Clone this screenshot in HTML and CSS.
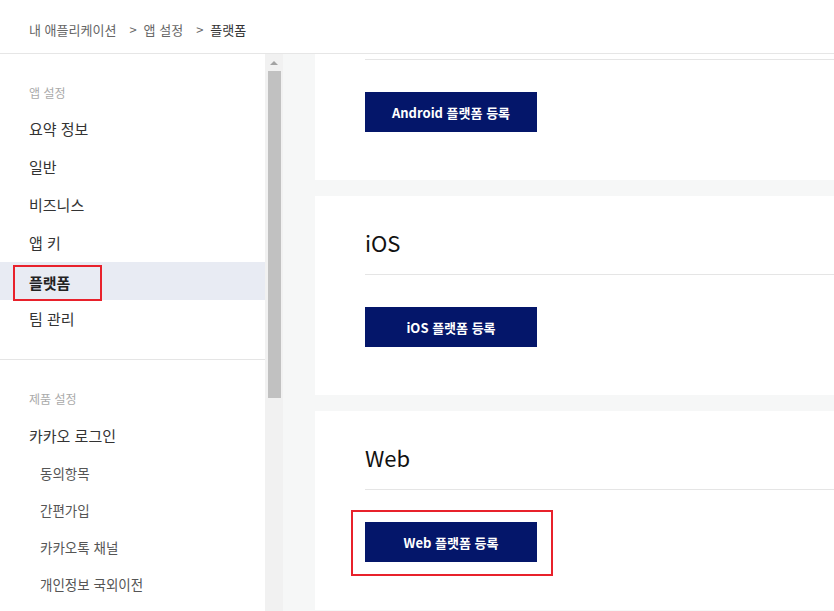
FILE: index.html
```html
<!DOCTYPE html>
<html lang="ko">
<head>
  <meta charset="UTF-8">
  <title>플랫폼 - 앱 설정</title>
  <link rel="stylesheet" href="styles.css">
</head>
<body>
  <header class="topbar">
    <nav class="breadcrumb">
      <a href="#">내 애플리케이션</a><span class="sep">&gt;</span><a href="#">앱 설정</a><span class="sep">&gt;</span><span class="current">플랫폼</span>
    </nav>
  </header>

  <div class="layout">
    <aside class="sidebar">
      <div class="menu-group">
        <p class="menu-label">앱 설정</p>
        <ul class="menu">
          <li><a href="#">요약 정보</a></li>
          <li><a href="#">일반</a></li>
          <li><a href="#">비즈니스</a></li>
          <li><a href="#">앱 키</a></li>
          <li class="active"><a href="#"><span class="marked">플랫폼</span></a></li>
          <li><a href="#">팀 관리</a></li>
        </ul>
      </div>
      <div class="menu-group">
        <p class="menu-label">제품 설정</p>
        <ul class="menu">
          <li><a href="#">카카오 로그인</a></li>
          <li class="sub"><a href="#">동의항목</a></li>
          <li class="sub"><a href="#">간편가입</a></li>
          <li class="sub"><a href="#">카카오톡 채널</a></li>
          <li class="sub"><a href="#">개인정보 국외이전</a></li>
        </ul>
      </div>
    </aside>

    <!-- sidebar scrollbar -->
    <div class="scrollbar">
      <span class="scroll-arrow"></span>
      <span class="scroll-thumb"></span>
    </div>

    <main class="content">
      <div class="cards">
        <section class="card">
          <h2 class="card-title">Android</h2>
          <button class="register-button">Android 플랫폼 등록</button>
        </section>

        <section class="card">
          <h2 class="card-title">iOS</h2>
          <button class="register-button">iOS 플랫폼 등록</button>
        </section>

        <section class="card">
          <h2 class="card-title">Web</h2>
          <div class="marked-box">
            <button class="register-button">Web 플랫폼 등록</button>
          </div>
        </section>
      </div>
    </main>
  </div>
</body>
</html>
```

FILE: styles.css
```css
html, body {
  margin: 0;
  padding: 0;
  height: 100%;
  overflow: hidden;
}

body {
  font-family: "Noto Sans CJK KR", "Noto Sans", sans-serif;
  color: #333;
  background: #fff;
  display: flex;
  flex-direction: column;
}

a {
  color: inherit;
  text-decoration: none;
}

/* top bar */

.topbar {
  height: 53px;
  border-bottom: 1px solid #e6e6e6;
  display: flex;
  align-items: center;
  padding-left: 29px;
  flex-shrink: 0;
}

.breadcrumb {
  font-size: 13px;
  color: #666;
  padding-top: 6px;
}

.breadcrumb .sep {
  margin: 0 7px 0 13px;
  color: #666;
}

.breadcrumb .current {
  color: #333;
}

/* layout */

.layout {
  flex: 1;
  display: flex;
  min-height: 0;
}

.sidebar {
  width: 265px;
  flex-shrink: 0;
  overflow: hidden;
}

.menu-group {
  padding: 30px 0 21px;
  border-bottom: 1px solid #e5e5e5;
}

.menu-label {
  margin: 0 0 8px;
  padding-left: 29px;
  font-size: 12px;
  line-height: 18px;
  color: #aaa;
}

.menu-group + .menu-group .menu-label {
  margin-bottom: 9px;
}

.menu {
  list-style: none;
  margin: 0;
  padding: 0;
}

.menu li a {
  display: block;
  height: 38px;
  line-height: 38px;
  padding-left: 29px;
  font-size: 15px;
  color: #333;
}

.menu li.active {
  background: #e8ebf3;
}

.menu li.active a {
  display: flex;
  align-items: flex-start;
  font-weight: bold;
  color: #222;
}

.marked {
  margin: 3px 0 0 -16px;
  padding: 0 30px 0 14px;
  height: 36px;
  line-height: 32px;
  box-sizing: border-box;
  border: 2px solid #e8212b;
}

.menu li.sub a {
  height: 37px;
  line-height: 37px;
  padding-left: 40px;
  font-size: 13.5px;
  color: #555;
}

/* scrollbar */

.scrollbar {
  width: 18px;
  flex-shrink: 0;
  background: #f1f1f1;
  display: flex;
  flex-direction: column;
  align-items: center;
}

.scroll-arrow {
  margin-top: 7px;
  width: 0;
  height: 0;
  border-left: 4px solid transparent;
  border-right: 4px solid transparent;
  border-bottom: 4px solid #a3a3a3;
}

.scroll-thumb {
  margin-top: 6px;
  width: 13px;
  height: 327px;
  background: #c1c1c1;
}

/* content */

.content {
  flex: 1;
  background: #f6f7f7;
  overflow: hidden;
  padding-left: 32px;
}

.cards {
  display: flex;
  flex-direction: column;
  gap: 16px;
  margin-top: -73px;
}

.card {
  background: #fff;
  padding: 25px 0 48px 50px;
}

.card-title {
  margin: 0 0 32px;
  padding-bottom: 11px;
  border-bottom: 1px solid #e5e5e5;
  font-size: 22px;
  font-weight: normal;
  line-height: 42px;
  color: #111;
}

.register-button {
  width: 172px;
  height: 40px;
  border: none;
  background: #04166a;
  color: #fff;
  font-family: inherit;
  font-size: 13px;
  font-weight: bold;
  cursor: pointer;
  display: block;
}

.marked-box {
  display: inline-block;
  margin: -12px 0 -14px -14px;
  padding: 10px 14px 12px 12px;
  border: 2px solid #e8212b;
}
```
